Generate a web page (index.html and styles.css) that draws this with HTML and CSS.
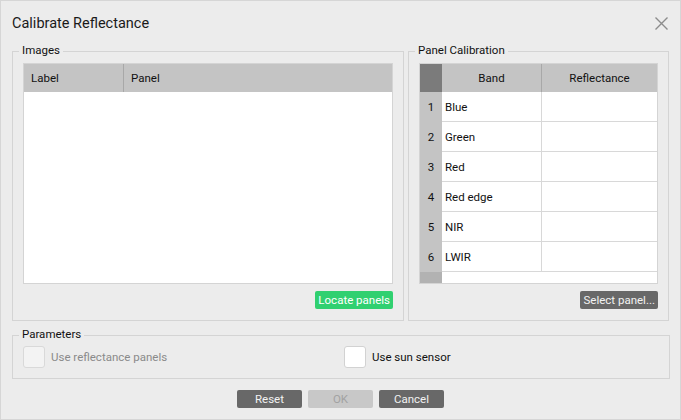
FILE: index.html
```html
<!DOCTYPE html>
<html>
<head>
<meta charset="utf-8">
<title>Calibrate Reflectance</title>
<link rel="stylesheet" href="styles.css">
</head>
<body>
<div class="dialog">
  <div class="titlebar">
    <h1 class="title">Calibrate Reflectance</h1>
    <button class="close" aria-label="Close">
      <svg width="13" height="13" viewBox="0 0 13 13"><path d="M0.5 0.5L12.5 12.5M12.5 0.5L0.5 12.5" stroke="#8c8c8c" stroke-width="1.4" fill="none"/></svg>
    </button>
  </div>

  <div class="groups">
    <fieldset class="group images">
      <legend>Images</legend>
      <div class="grid-table img-table">
        <div class="img-head">
          <div class="hcell col-label">Label</div>
          <div class="hcell col-panel">Panel</div>
        </div>
        <div class="img-body"></div>
      </div>
      <div class="actions"><button class="btn btn-green">Locate panels</button></div>
    </fieldset>

    <fieldset class="group calib">
      <legend>Panel Calibration</legend>
      <div class="grid-table cal-table">
        <div class="cal-row cal-head">
          <div class="corner"></div>
          <div class="hcell center sep">Band</div>
          <div class="hcell center">Reflectance</div>
        </div>
        <div class="cal-row"><div class="rh">1</div><div class="cell sep">Blue</div><div class="cell"></div></div>
        <div class="cal-row"><div class="rh">2</div><div class="cell sep">Green</div><div class="cell"></div></div>
        <div class="cal-row"><div class="rh">3</div><div class="cell sep">Red</div><div class="cell"></div></div>
        <div class="cal-row"><div class="rh">4</div><div class="cell sep">Red edge</div><div class="cell"></div></div>
        <div class="cal-row"><div class="rh">5</div><div class="cell sep">NIR</div><div class="cell"></div></div>
        <div class="cal-row"><div class="rh">6</div><div class="cell sep">LWIR</div><div class="cell"></div></div>
        <div class="cal-filler"><div class="rh-fill"></div><div></div></div>
      </div>
      <div class="actions"><button class="btn btn-dark">Select panel...</button></div>
    </fieldset>
  </div>

  <fieldset class="group params">
    <legend>Parameters</legend>
    <div class="param-grid">
      <label class="check disabled"><span class="box"></span><span>Use reflectance panels</span></label>
      <label class="check"><span class="box"></span><span>Use sun sensor</span></label>
    </div>
  </fieldset>

  <div class="footer">
    <button class="btn btn-dark fbtn">Reset</button>
    <button class="btn btn-disabled fbtn">OK</button>
    <button class="btn btn-dark fbtn">Cancel</button>
  </div>
</div>
</body>
</html>
```

FILE: styles.css
```css
* { box-sizing: border-box; }

html, body {
  margin: 0;
  padding: 0;
  background: #ececec;
}

body {
  font-family: Roboto, "Noto Sans", sans-serif;
  font-size: 11.5px;
  color: #111111;
}

.dialog {
  width: 681px;
  height: 420px;
  border: 1px solid #d6d6d6;
  background: #ececec;
  display: flex;
  flex-direction: column;
}

.titlebar {
  height: 42px;
  display: flex;
  align-items: center;
  justify-content: space-between;
  padding: 0 12px 0 11px;
}

.title {
  margin: 3px 0 0 0;
  font-size: 14.5px;
  font-weight: normal;
  line-height: 20px;
  color: #1a1a1a;
}

.close {
  border: 0;
  background: none;
  padding: 0;
  margin-top: 2px;
  width: 13px;
  height: 13px;
  display: flex;
}

.groups {
  display: flex;
  gap: 4px;
  padding: 0 0 0 11px;
}

.group {
  margin: 0;
  min-width: 0;
  border: 1px solid #d4d4d4;
  padding: 3px 10px 11px 10px;
}

.group legend {
  padding: 0 3px 3px 3px;
  margin-left: -4px;
  line-height: 14px;
  color: #111111;
}

.images { width: 392px; }
.calib { width: 261px; }

.grid-table {
  height: 221px;
  border: 1px solid #d4d4d4;
  background: #ffffff;
  display: flex;
  flex-direction: column;
}

.img-head {
  height: 28px;
  display: flex;
  background: #c4c4c4;
}

.hcell {
  display: flex;
  align-items: center;
  height: 100%;
}

.col-label {
  width: 100px;
  padding-left: 7px;
  border-right: 1px solid #a8a8a8;
}

.col-panel {
  flex: 1;
  padding-left: 7px;
}

.img-body { flex: 1; }

.actions {
  display: flex;
  justify-content: flex-end;
  margin-top: 7px;
}

.btn {
  height: 18px;
  border: 0;
  border-radius: 2px;
  font-family: inherit;
  font-size: 11.5px;
  line-height: 18px;
  padding: 0 3px;
  color: #ffffff;
}

.btn-green { background: #30d070; }
.btn-dark { background: #686868; color: #f2f2f2; }
.btn-disabled { background: #c8c8c8; color: #a2a2a2; }

.cal-row {
  display: grid;
  grid-template-columns: 22px 100px 1fr;
  height: 30px;
}

.cal-head {
  height: 28px;
  background: #c4c4c4;
}

.corner { background: #7b7b7b; }

.center { justify-content: center; }

.sep { border-right: 1px solid #d8d8d8; }
.cal-head .sep { border-right-color: #a8a8a8; }

.rh {
  background: #c4c4c4;
  display: flex;
  align-items: center;
  justify-content: center;
}

.cell {
  display: flex;
  align-items: center;
  padding-left: 3px;
  border-bottom: 1px solid #d8d8d8;
}

.cal-filler {
  flex: 1;
  display: grid;
  grid-template-columns: 22px 1fr;
}

.rh-fill { background: #b2b2b2; }

.params {
  margin: 6px 11px 0 11px;
  width: 658px;
  padding: 2px 10px 10px 10px;
}

.param-grid {
  display: grid;
  grid-template-columns: 321px 1fr;
}

.check {
  display: flex;
  align-items: center;
  gap: 6px;
}

.box {
  width: 22px;
  height: 22px;
  border: 1px solid #d2d2d2;
  border-radius: 3px;
  background: #ffffff;
}

.check.disabled { color: #8a8a8a; }
.check.disabled .box { background: #f3f3f3; border-color: #d9d9d9; }

.footer {
  display: flex;
  justify-content: center;
  gap: 6px;
  margin-top: 11px;
}

.fbtn { width: 65px; }
```
